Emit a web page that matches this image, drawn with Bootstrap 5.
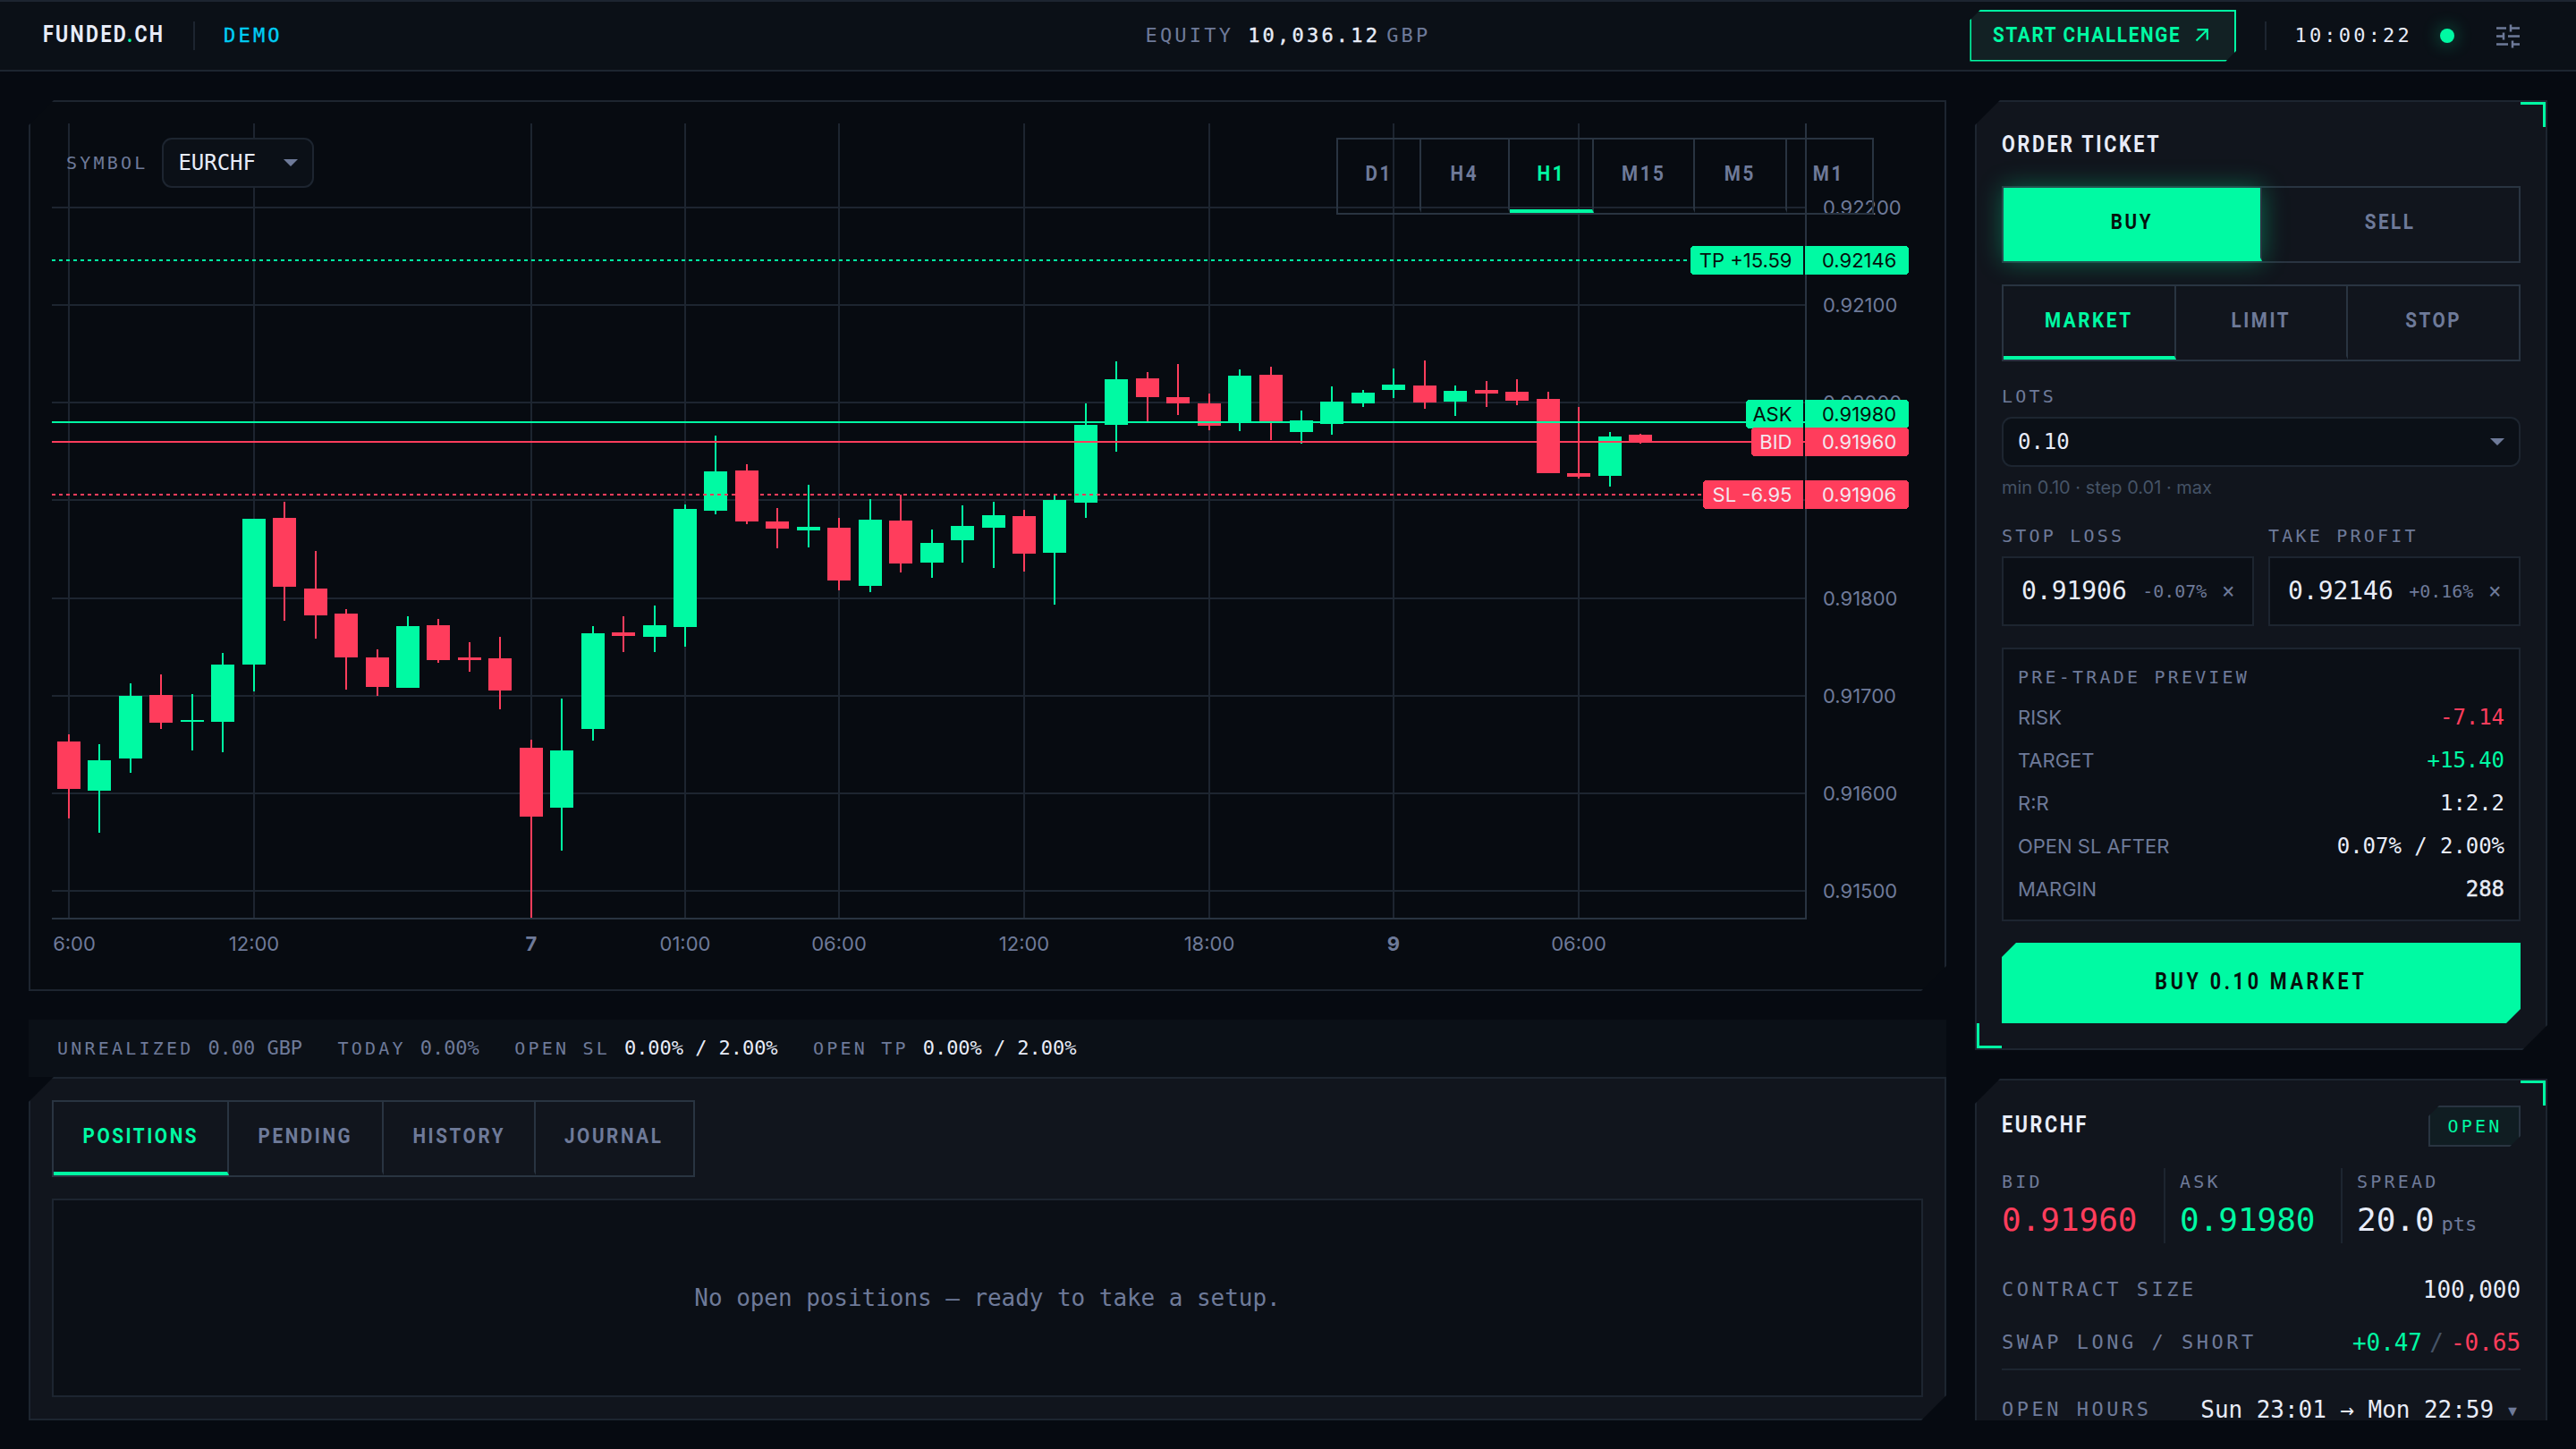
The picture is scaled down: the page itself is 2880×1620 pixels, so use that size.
<!DOCTYPE html>
<html lang="en" data-bs-theme="dark">
<head>
    <meta charset="utf-8">
    <title>Funded.ch</title>
    <link href="https://cdn.jsdelivr.net/npm/bootstrap@5.3.1/dist/css/bootstrap.min.css" rel="stylesheet">
    <style>
        :root {
            --page: #060a11;
            --bar: #0b1017;
            --panel: #11151d;
            --line: #1d2530;
            --line2: #293441;
            --muted: #6e7a99;
            --dim: #455366;
            --ink: #e8ecf8;
            --up: #00faa3;
            --down: #ff3d5c;
        }
        html, body { height: 1620px; overflow: hidden; }
        body { background: var(--page); color: var(--ink); font-family: Inter, "Liberation Sans", sans-serif; font-size: 22px; line-height: 1; }
        .mono { font-family: "DejaVu Sans Mono", "Liberation Mono", monospace; letter-spacing: -.002em; white-space: nowrap; }
        .disp { font-family: Roboto, "Liberation Sans", sans-serif; font-weight: 700; white-space: nowrap; }
        /* condensed display lettering */
        .sq { display: inline-block; transform: scaleX(.86); }
        .sq-l { transform-origin: left; }
        .lbl { font-size: 20px; letter-spacing: 3.2px; color: var(--muted); }
        .muted { color: var(--muted); }
        .up { color: var(--up); }
        .down { color: var(--down); }
        .semi { -webkit-text-stroke: .4px currentColor; }
        .f22 { font-size: 22px; } .f24 { font-size: 24px; } .f26 { font-size: 26px; }

        .topbar { height: 80px; background: var(--bar); border-top: 2px solid var(--line); border-bottom: 2px solid var(--line); padding: 0 62px; display: grid; grid-template-columns: 1fr auto 1fr; }
        .brand { font-size: 25px; letter-spacing: 2.7px; width: 136px; margin: -3px 0 0 -14px; }
        .sep { flex: none; width: 2px; height: 32px; background: var(--line); margin: 0 32px; }
        .sp { letter-spacing: 3.2px; }
        .demo { color: #00cdf5; }
        .gbp { margin-left: 7px; }
        .cta { flex: none; width: 298px; height: 58px; margin-top: -1px; border: 2px solid var(--up); background: #122124; color: var(--up); font-size: 24px; letter-spacing: 2px; padding: 0 0 2px 24px; clip-path: polygon(12px 0, 100% 0, 100% calc(100% - 12px), calc(100% - 12px) 100%, 0 100%, 0 12px); }
        .cta .sq { width: 226px; }
        .clock { margin-left: -1px; }
        .live { width: 16px; height: 16px; margin: 0 46px 0 31px; background: var(--up); box-shadow: 0 0 20px rgba(0, 250, 162, .45); }

        .desk { padding: 32px 32px 0; display: grid; grid-template-columns: 2144px 640px; column-gap: 32px; height: 1508px; }
        .sheet { border: 2px solid var(--line); background: var(--panel); clip-path: polygon(28px 0, 100% 0, 100% calc(100% - 28px), calc(100% - 28px) 100%, 0 100%, 0 28px); }
        .chart-sheet { height: 996px; background: #070b11; padding: 24px; }
        .chart-sheet svg { display: block; }
        .tools { top: 16px; left: 16px; right: 55px; }
        .pick { height: 56px; border: 2px solid var(--line); border-radius: 11px; background: var(--bar); padding: 0 16px 0 16px; }
        .arrow { border: 8px solid transparent; border-top-color: var(--muted); border-bottom: 0; }
        .tools .arrow { margin-left: 31px; }

        .seg { border: 2px solid var(--line2); height: 86px; }
        .seg > div { display: flex; align-items: center; justify-content: center; border-right: 2px solid var(--line2); border-bottom: 4px solid transparent; color: var(--muted); font-size: 24px; letter-spacing: 3px; padding: 0 0 3px; }
        .seg > div:last-child { border-right-color: transparent; }
        .seg > .on { color: var(--up); border-bottom-color: var(--up); }
        .seg > .fill { background: var(--up) padding-box; border-bottom-color: var(--up); color: #06110d; box-shadow: 0 0 26px rgba(0, 250, 162, .36); }
        .seg-even > div { flex: 1 1 0; box-sizing: content-box; }
        .seg-even > div:last-child { border-right: 0; }

        .strip { height: 64px; margin-top: 32px; background: var(--bar); padding: 0 32px; gap: 39.5px; }
        .strip > div { display: flex; align-items: center; gap: 16px; }
        .book { height: 384px; padding: 24px; }
        .void { height: 222px; margin-top: 24px; border: 2px solid var(--line); background: #0b0f16; }

        .side { height: 1476px; overflow: hidden; }
        .side .sheet { padding: 0 28px; }
        .tick { width: 28px; height: 28px; border: 0 solid var(--up); }
        .tick-tr { top: 0; right: 0; border-width: 3px 3px 0 0; }
        .tick-bl { bottom: 0; left: 0; border-width: 0 0 3px 3px; }
        .ticket { height: 1062px; }
        .ttl { font-size: 25px; letter-spacing: 3.1px; }
        .ticket .ttl { line-height: 94px; height: 94px; padding-top: 1px; }
        .lots { margin-top: 29px; height: 20px; margin-bottom: 13px; }
        .hint { font-size: 20px; color: var(--dim); margin-top: 13px; }
        .levels { margin-top: 34px; }
        .field { height: 78px; margin-top: 13px; border: 2px solid var(--line); background: #0b0f16; padding: 0 21px 0 20px; }
        .lv { font-size: 28px; }
        .pc { font-size: 20px; color: var(--muted); }
        .cross { font-size: 24px; width: 12px; text-indent: -1px; color: var(--muted); }
        .preview { height: 306px; border: 2px solid var(--line); background: #0b0f16; padding: 21px 16px 0; }
        #preview { margin-top: 11px; }
        .prow { height: 48px; }
        .go { height: 90px; background: var(--up); color: #06110d; font-size: 25px; letter-spacing: 4.3px; padding-bottom: 3px; clip-path: polygon(16px 0, 100% 0, 100% calc(100% - 16px), calc(100% - 16px) 100%, 0 100%, 0 16px); }

        .info { height: 500px; margin-top: 32px; }
        .info-head { margin-top: 28px; height: 46px; }
        .info-head .ttl { margin-top: -3px; }
        .chip { width: 103px; height: 46px; border: 2px solid var(--line2); background: #101d22; padding-left: 1px; clip-path: polygon(12px 0, 100% 0, 100% calc(100% - 12px), calc(100% - 12px) 100%, 0 100%, 0 12px); }
        .chip.lbl { color: var(--up); }
        .quotes { display: grid; grid-template-columns: 181px 198px 1fr; height: 84px; margin-top: 24px; }
        .quotes > div + div { border-left: 2px solid var(--line); padding-left: 16px; }
        .quotes .lbl { margin-top: 5px; }
        .big { font-size: 36px; margin-top: 15px; line-height: 36px; }
        .pts { margin-left: 8px; }
        .facts { margin-top: 22px; }
        .fact { height: 59px; display: flex; align-items: center; justify-content: space-between; }
        .fact-key { font-size: 22px; letter-spacing: 3.5px; color: var(--muted); }
        .slash { color: var(--dim); width: 32px; text-align: center; }
        .hours { border-top: 2px solid var(--line); height: 90px; }
        .caret { display: inline-block; width: 18px; margin-left: 12px; text-align: center; font-size: 25px; line-height: 20px; color: var(--muted); }
        .tx { font-family: Inter, "Liberation Sans", sans-serif; font-size: 22px; fill: var(--muted); }
        .tx-dark { fill: #06110d; }
        .tx-light { fill: #f3e6ee; }
    </style>
    <script src="https://cdn.jsdelivr.net/npm/bootstrap@5.3.1/dist/js/bootstrap.bundle.min.js"></script>
</head>
<body>
    <header class="topbar align-items-center">
        <div class="d-flex align-items-center">
            <span class="disp brand sq sq-l">FUNDED<span class="up">.</span>CH</span>
            <span class="sep"></span>
            <span class="mono f22 sp demo semi">DEMO</span>
        </div>
        <div class="d-flex align-items-center mono f22 sp">
            <span class="muted">EQUITY</span><span class="ms-3 semi">10,036.12</span><span class="muted gbp">GBP</span>
        </div>
        <div class="d-flex align-items-center justify-content-end">
            <div class="cta disp d-flex align-items-center">
                <span class="sq sq-l">START CHALLENGE</span>
                <svg width="16" height="16" viewBox="0 0 16 16" fill="none" stroke="currentColor" stroke-width="2.2"><path d="M1.5 14.5 13.5 2.5M2.5 2.2h11.3v11.3"/></svg>
            </div>
            <span class="sep"></span>
            <span class="mono f22 sp clock">10:00:22</span>
            <span class="live rounded-circle"></span>
            <svg width="28" height="28" viewBox="0 0 28 28" fill="none" stroke="#6e7a99" stroke-width="2.5"><path d="M1 5.5h11M17 5.5h10M17 1.5v8M1 14.5h8M14 14.5h13M9 10.5v8M1 23.5h13M19 23.5h8M19 19.5v8"/></svg>
        </div>
    </header>

    <main class="desk">
        <section>
            <div class="sheet chart-sheet">
                <div class="position-relative">
                    <svg id="chart" width="2092" height="944" viewBox="58 138 2092 944" shape-rendering="crispEdges"></svg>
                    <div class="tools position-absolute d-flex justify-content-between align-items-start">
                        <div class="d-flex align-items-center">
                            <span class="mono lbl">SYMBOL</span>
                            <div class="pick d-flex align-items-center ms-3">
                                <span class="mono f24">EURCHF</span><span class="arrow"></span>
                            </div>
                        </div>
                        <div class="seg disp d-flex" id="frames"></div>
                    </div>
                </div>
            </div>

            <div class="strip d-flex align-items-center mono f22">
                <div><span class="lbl">UNREALIZED</span><span class="muted">0.00 GBP</span></div>
                <div><span class="lbl">TODAY</span><span class="muted">0.00%</span></div>
                <div><span class="lbl">OPEN SL</span><span>0.00% / 2.00%</span></div>
                <div><span class="lbl">OPEN TP</span><span>0.00% / 2.00%</span></div>
            </div>

            <div class="sheet book">
                <div class="seg disp d-inline-flex" id="tabs"></div>
                <div class="void d-flex align-items-center justify-content-center mono f26 muted">No open positions — ready to take a setup.</div>
            </div>
        </section>

        <aside class="side">
            <div class="sheet ticket position-relative">
                <i class="tick tick-tr position-absolute"></i>
                <i class="tick tick-bl position-absolute"></i>
                <div class="disp ttl"><span class="sq sq-l">ORDER TICKET</span></div>
                <div class="seg seg-even disp d-flex">
                    <div class="fill"><span class="sq">BUY</span></div>
                    <div><span class="sq">SELL</span></div>
                </div>
                <div class="seg seg-even disp d-flex mt-4">
                    <div class="on"><span class="sq">MARKET</span></div>
                    <div><span class="sq">LIMIT</span></div>
                    <div><span class="sq">STOP</span></div>
                </div>
                <div class="mono lbl lots">LOTS</div>
                <div class="pick d-flex align-items-center justify-content-between">
                    <span class="mono f24">0.10</span><span class="arrow"></span>
                </div>
                <div class="hint">min 0.10 · step 0.01 · max</div>
                <div class="row gx-3 levels">
                    <div class="col">
                        <div class="mono lbl">STOP LOSS</div>
                        <div class="field d-flex align-items-center justify-content-between mono">
                            <span class="lv">0.91906</span><span class="pc">-0.07%</span><span class="cross">×</span>
                        </div>
                    </div>
                    <div class="col">
                        <div class="mono lbl">TAKE PROFIT</div>
                        <div class="field d-flex align-items-center justify-content-between mono">
                            <span class="lv">0.92146</span><span class="pc">+0.16%</span><span class="cross">×</span>
                        </div>
                    </div>
                </div>
                <div class="preview mt-4">
                    <div class="mono lbl">PRE-TRADE PREVIEW</div>
                    <div id="preview"></div>
                </div>
                <div class="go disp d-flex align-items-center justify-content-center mt-4"><span class="sq">BUY 0.10 MARKET</span></div>
            </div>

            <div class="sheet info position-relative">
                <i class="tick tick-tr position-absolute"></i>
                <div class="d-flex justify-content-between align-items-center info-head">
                    <span class="disp ttl sq sq-l">EURCHF</span>
                    <span class="chip d-flex align-items-center justify-content-center mono lbl">OPEN</span>
                </div>
                <div class="quotes mono">
                    <div><div class="lbl">BID</div><div class="big down">0.91960</div></div>
                    <div><div class="lbl">ASK</div><div class="big up">0.91980</div></div>
                    <div><div class="lbl">SPREAD</div><div class="big">20.0<span class="f22 muted pts">pts</span></div></div>
                </div>
                <div class="facts mono f26">
                    <div class="fact"><span class="fact-key">CONTRACT SIZE</span><span>100,000</span></div>
                    <div class="fact"><span class="fact-key">SWAP LONG / SHORT</span><span class="d-flex"><span class="up">+0.47</span><span class="slash">/</span><span class="down">-0.65</span></span></div>
                    <div class="fact hours"><span class="fact-key">OPEN HOURS</span><span>Sun 23:01 → Mon 22:59<span class="caret">▾</span></span></div>
                </div>
            </div>
        </aside>
    </main>

    <script>
        // segmented controls: label and cell width
        function seg(id, items, active) {
            document.getElementById(id).innerHTML = items.map(([t, w]) =>
                `<div class="${t === active ? 'on' : ''}" style="width:${w}px"><span class="sq">${t}</span></div>`).join('');
        }
        seg('frames', [['D1', 93], ['H4', 99], ['H1', 94], ['M15', 113], ['M5', 103], ['M1', 95]], 'H1');
        seg('tabs', [['POSITIONS', 196], ['PENDING', 173], ['HISTORY', 170], ['JOURNAL', 176]], 'POSITIONS');

        const rows = [['RISK', '-7.14', 'down'], ['TARGET', '+15.40', 'up'], ['R:R', '1:2.2', ''], ['OPEN SL AFTER', '0.07% / 2.00%', ''], ['MARGIN', '288', 'semi']];
        document.getElementById('preview').innerHTML = rows.map(([k, v, c]) =>
            `<div class="prow d-flex align-items-center justify-content-between"><span class="muted">${k}</span><span class="mono f24 ${c}">${v}</span></div>`).join('');

        // one candle per hour: [up?, high, low, body top, body bottom]
        const candles = [
            [0, 821, 915, 829, 882], [1, 832, 931, 850, 884], [1, 764, 864, 778, 848], [0, 754, 815, 777, 808],
            [1, 776, 839, 805, 807], [1, 730, 841, 743, 807], [1, 580, 773, 580, 743], [0, 561, 694, 579, 656],
            [0, 616, 714, 658, 688], [0, 681, 771, 686, 735], [0, 726, 778, 735, 768], [1, 689, 769, 700, 769],
            [0, 692, 741, 699, 738], [0, 718, 751, 735, 738], [0, 712, 793, 736, 772], [0, 827, 1026, 836, 913],
            [1, 781, 951, 839, 903], [1, 700, 828, 708, 815], [0, 689, 729, 707, 711], [1, 677, 729, 699, 712],
            [1, 564, 723, 569, 701], [1, 487, 575, 527, 571], [0, 519, 586, 526, 583], [0, 568, 613, 583, 591],
            [1, 542, 612, 589, 593], [0, 579, 660, 590, 649], [1, 558, 662, 581, 655], [0, 553, 640, 582, 630],
            [1, 592, 646, 607, 629], [1, 565, 629, 588, 604], [1, 561, 635, 576, 590], [0, 570, 639, 577, 619],
            [1, 554, 676, 559, 618], [1, 451, 579, 475, 562], [1, 404, 505, 424, 475], [0, 416, 472, 423, 444],
            [0, 407, 464, 444, 451], [0, 440, 481, 451, 476], [1, 413, 482, 420, 472], [0, 410, 492, 419, 472],
            [1, 459, 496, 470, 483], [1, 432, 486, 449, 474], [1, 436, 455, 439, 451], [1, 412, 445, 430, 436],
            [0, 403, 457, 431, 450], [1, 431, 465, 437, 449], [0, 426, 455, 436, 440], [0, 424, 453, 438, 448],
            [0, 438, 529, 446, 529], [0, 455, 535, 529, 533], [1, 483, 544, 488, 532], [0, 485, 496, 486, 494]
        ];
        const up = '#00faa3', down = '#ff3d5c', grid = '#1d2530';
        const rect = (x, y, w, h, f) => `<rect x="${x}" y="${y}" width="${w}" height="${h}" fill="${f}"/>`;
        const cx = i => Math.round(77 + 34.45 * i);
        let g = '';

        [[0, '6:00'], [6, '12:00'], [15, '7'], [20, '01:00'], [25, '06:00'], [31, '12:00'], [37, '18:00'], [43, '9'], [49, '06:00']].forEach(([i, t]) => {
            g += rect(cx(i) - 1, 138, 2, 888, grid);
            g += `<text class="tx" x="${i ? cx(i) : 83}" y="1063" text-anchor="middle" ${t.length < 2 ? 'font-weight="700"' : ''}>${t}</text>`;
        });
        for (let k = 0; k < 8; k++) {
            const y = Math.round(232 + 109.15 * k);
            g += rect(58, y - 1, 1960, 2, grid);
            // the stop loss tag sits on 0.91900
            if (k !== 3) g += `<text class="tx" x="2038" y="${y + 8}">${(0.922 - k * 0.001).toFixed(5)}</text>`;
        }
        g += rect(2018, 138, 2, 890, '#293441') + rect(58, 1026, 1962, 2, '#293441');

        candles.forEach(([u, hi, lo, top, bot], i) => {
            const c = u ? up : down;
            g += rect(cx(i) - 1, hi, 2, lo - hi, c) + rect(cx(i) - 13, top, 26, bot - top, c);
        });

        // price lines with their tags on the axis
        [['TP +15.59', '0.92146', 291, 275, 1890, up, 1], ['ASK', '0.91980', 472, 447, 1952, up, 0],
         ['BID', '0.91960', 494, 478, 1958, down, 0], ['SL -6.95', '0.91906', 553, 537, 1904, down, 1]].forEach(([n, p, y, ty, x, c, dot]) => {
            const ink = c === up ? 'tx-dark' : 'tx-light';
            g += `<path d="M58 ${y}H${dot ? x - 2 : 2018}" stroke="${c}" stroke-width="2" ${dot ? 'stroke-dasharray="4 4"' : ''}/>`;
            g += `<path d="M2016 ${ty}v32H${x + 4}a4 4 0 0 1-4-4v-24a4 4 0 0 1 4-4z" fill="${c}"/>`;
            g += `<path d="M2018 ${ty}v32h112a4 4 0 0 0 4-4v-24a4 4 0 0 0-4-4z" fill="${c}"/>`;
            g += `<text class="tx ${ink}" x="2003.5" y="${ty + 24}" text-anchor="end">${n}</text>`;
            g += `<text class="tx ${ink}" x="2037" y="${ty + 24}">${p}</text>`;
        });
        document.getElementById('chart').innerHTML = g;
    </script>
</body>
</html>
